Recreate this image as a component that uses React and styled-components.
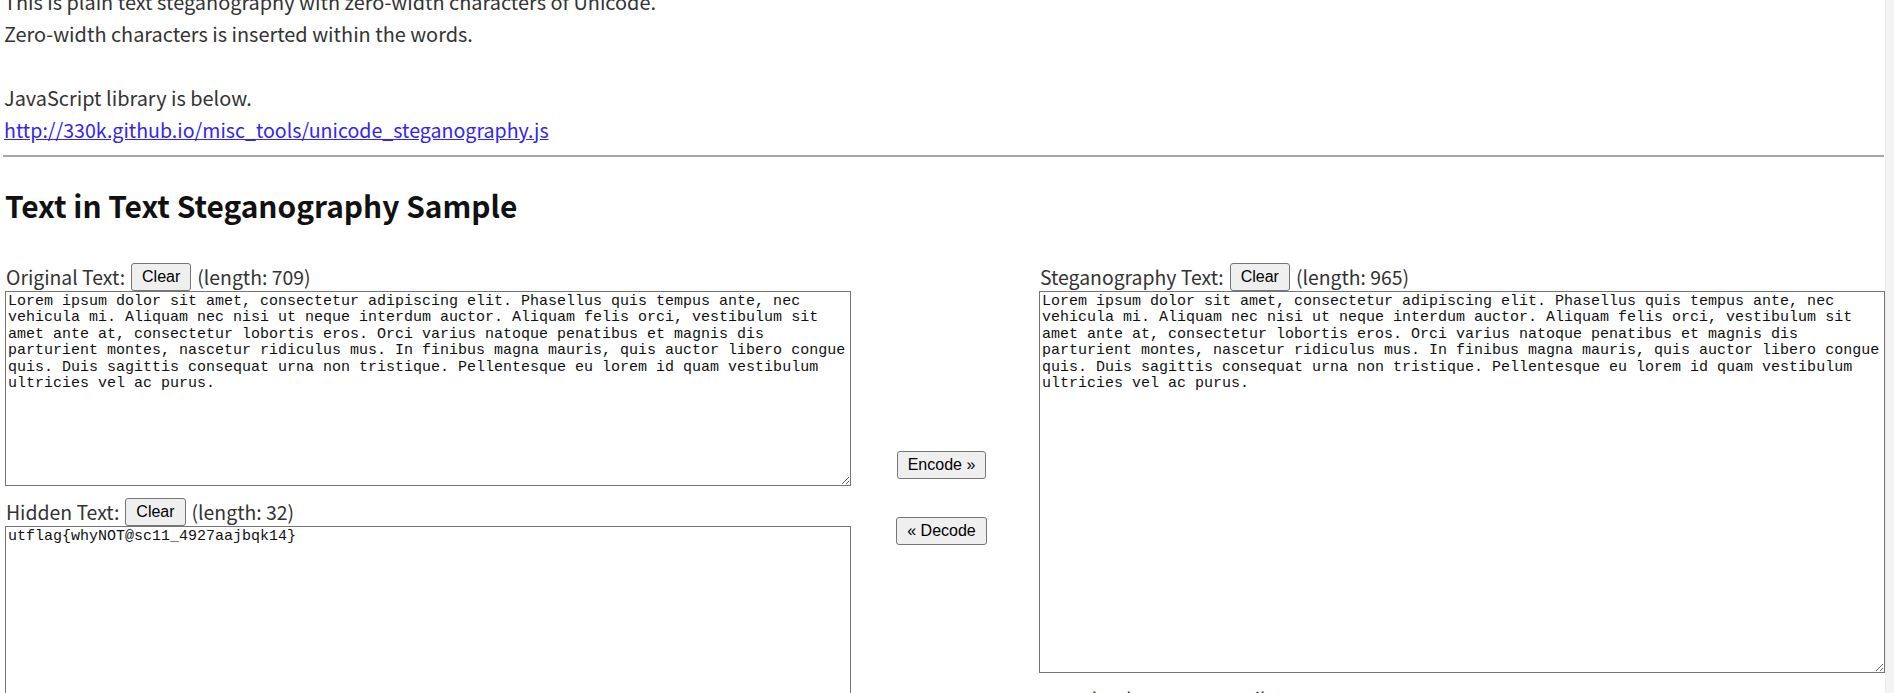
import React from "react";
import styled, { createGlobalStyle } from "styled-components";

const Global = createGlobalStyle`
  html, body { margin: 0; padding: 0; overflow: hidden; background: #fff; }
  body { font-family: "Noto Sans CJK JP", "Noto Sans", sans-serif; }
`;

const Page = styled.div`
  display: flex;
  height: 100vh;
  width: 100vw;
`;

const Main = styled.div`
  flex: 1;
  overflow: hidden;
  padding: 0 1px 0 4px;
`;

const Scrollbar = styled.div`
  width: 8px;
  background: #f3f3f3;
  border-left: 1px solid #ececec;
`;

const Content = styled.div`
  margin-top: -14px;
`;

const Line = styled.div`
  font-size: 19.9px;
  line-height: 32px;
  height: 32px;
  color: #333;
`;

const Link = styled.a`
  font-size: 19.6px;
  color: #3225f2;
  text-decoration: underline;
`;

const Rule = styled.hr`
  margin: 9px 0 0 -1px;
  border: 0;
  border-top: 2px solid #a6a6a6;
  height: 0;
`;

const Heading = styled.h2`
  margin: 28px 0 0 1px;
  font-size: 29.9px;
  line-height: 40px;
  font-weight: 700;
  color: #111;
`;

const Columns = styled.div`
  display: flex;
  margin-top: 38px;
`;

const Side = styled.div`
  width: 45%;
  display: flex;
  flex-direction: column;
  box-sizing: border-box;
`;

const Middle = styled.div`
  width: 10%;
  display: flex;
  flex-direction: column;
  align-items: center;
  gap: 38px;
  padding-top: 188px;
  padding-right: 5px;
  box-sizing: border-box;
`;

const LabelRow = styled.div`
  display: flex;
  align-items: center;
  gap: 6px;
  height: 27px;
  margin-top: ${(p) => p.$top || 0}px;
  padding-left: 2px;
  font-size: 19.4px;
  color: #333;
`;

const Button = styled.button`
  height: 28px;
  padding: 0 10px;
  border: 1px solid #767676;
  border-radius: 3px;
  background: #efefef;
  color: #000;
  font-family: "Liberation Sans", Arial, sans-serif;
  font-size: 16px;
  line-height: 26px;
  cursor: pointer;
`;

const Area = styled.textarea`
  display: block;
  margin-top: 1px;
  margin-left: 1px;
  width: 100%;
  height: ${(p) => p.$h}px;
  box-sizing: border-box;
  padding: 2px;
  border: 1px solid #767676;
  font-family: "Liberation Mono", "DejaVu Sans Mono", monospace;
  font-size: 15px;
  line-height: 16.4px;
  color: #111;
  resize: both;
  outline: none;
`;

const Note = styled.div`
  margin-top: 10px;
  padding-left: 2px;
  font-size: 19.2px;
  line-height: 32px;
  color: #333;
`;

const LOREM =
  "Lorem ipsum dolor sit amet, consectetur adipiscing elit. Phasellus quis tempus ante, nec vehicula mi. Aliquam nec nisi ut neque interdum auctor. Aliquam felis orci, vestibulum sit amet ante at, consectetur lobortis eros. Orci varius natoque penatibus et magnis dis parturient montes, nascetur ridiculus mus. In finibus magna mauris, quis auctor libero congue quis. Duis sagittis consequat urna non tristique. Pellentesque eu lorem id quam vestibulum ultricies vel ac purus.";

export default function App() {
  return (
    <>
      <Global />
      <Page>
        <Main>
          <Content>
            <Line>This is plain text steganography with zero-width characters of Unicode.</Line>
            <Line>Zero-width characters is inserted within the words.</Line>
            <Line />
            <Line>JavaScript library is below.</Line>
            <Line>
              <Link href="#">http://330k.github.io/misc_tools/unicode_steganography.js</Link>
            </Line>
            <Rule />
            <Heading>Text in Text Steganography Sample</Heading>
            <Columns>
              <Side>
                <LabelRow>
                  Original Text: <Button>Clear</Button> (length: 709)
                </LabelRow>
                <Area $h={195} defaultValue={LOREM} spellCheck={false} />
                <LabelRow $top={12}>
                  Hidden Text: <Button>Clear</Button> (length: 32)
                </LabelRow>
                <Area $h={195} defaultValue="utflag{whyNOT@sc11_4927aajbqk14}" spellCheck={false} />
              </Side>
              <Middle>
                <Button>Encode »</Button>
                <Button>« Decode</Button>
              </Middle>
              <Side>
                <LabelRow>
                  Steganography Text: <Button>Clear</Button> (length: 965)
                </LabelRow>
                <Area $h={382} defaultValue={LOREM} spellCheck={false} />
                <Note>Download Steg Text as File</Note>
              </Side>
            </Columns>
          </Content>
        </Main>
        <Scrollbar />
      </Page>
    </>
  );
}
